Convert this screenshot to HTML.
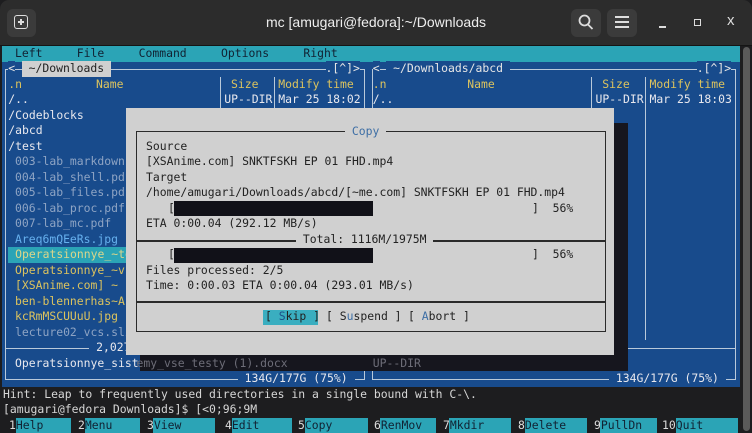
<!DOCTYPE html>
<html><head><meta charset="utf-8"><style>
*{margin:0;padding:0;box-sizing:border-box}
body{width:752px;height:433px;overflow:hidden;background:#1d1d1f;position:relative;font-family:"DejaVu Sans Mono","Liberation Mono",monospace}
.hdr{position:absolute;left:0;top:0;width:752px;height:46px;background:#2c2c2c;border-radius:9px 9px 0 0;border-bottom:1px solid #151515}
.btn{position:absolute;background:#3b3b3b;border-radius:6px}
.a{position:absolute;white-space:pre;font-size:11.42px;line-height:15.48px;height:15.48px;left:calc(1.5px + var(--c)*6.75px);top:calc(46px + var(--r)*15.48px);color:#e6e6e6}
.p{position:absolute;white-space:pre;font-size:11.42px;line-height:15.48px;height:15.48px;color:#222}
.y{color:#dcc35e}.g{color:#8ea4c4}.lb{color:#66b0ee}.w{color:#e8e8ee}
.bb{background:#184b8c}
.vl{position:absolute;width:1px;background:#b9c9da}
.hz{position:absolute;height:1px;background:#b9c9da}
.k{position:absolute;top:417.5px;height:15.5px;background:#2ba4b6}
.kd{position:absolute;top:417.5px;font-size:11.42px;line-height:15.5px;color:#ddd;white-space:pre}
.kl{color:#123;}
</style></head><body>
<div class="hdr"></div>
<div class="btn" style="left:7px;top:9px;width:29px;height:28px"></div>
<div style="position:absolute;left:14px;top:15px;width:14px;height:14px;border:1.6px solid #ddd;border-radius:3px"></div>
<div style="position:absolute;left:18px;top:21px;width:6px;height:1.6px;background:#ddd"></div>
<div style="position:absolute;left:20.2px;top:18.8px;width:1.6px;height:6px;background:#ddd"></div>
<div style="position:absolute;left:0;width:752px;top:14px;text-align:center;font:14px 'Liberation Sans',sans-serif;color:#eee">mc [amugari@fedora]:~/Downloads</div>
<div class="btn" style="left:571px;top:9px;width:30px;height:28px"></div>
<svg style="position:absolute;left:578px;top:14px" width="16" height="17" viewBox="0 0 16 17"><circle cx="6.5" cy="6.5" r="5" fill="none" stroke="#ddd" stroke-width="1.8"/><path d="M10 10.5 L14.5 15" stroke="#ddd" stroke-width="1.8"/></svg>
<div class="btn" style="left:607px;top:9px;width:30px;height:28px"></div>
<div style="position:absolute;left:615px;top:16px;width:14px;height:2px;background:#ddd;box-shadow:0 5px 0 #ddd,0 10px 0 #ddd"></div>
<div style="position:absolute;left:659px;top:26px;width:7px;height:2px;background:#ddd"></div>
<div style="position:absolute;left:694px;top:19px;width:7px;height:7px;border:1.5px solid #ddd"></div>
<div style="position:absolute;left:727px;top:12px;font:15px 'Liberation Sans',sans-serif;color:#ddd">x</div>

<div style="position:absolute;left:743px;top:47px;width:7px;height:384px;background:#5a5a5a;border-radius:4px"></div>

<div style="position:absolute;left:2px;top:46px;width:738px;height:15.5px;background:#2ba4b6"></div>
<div class="a" style="--c:2;--r:0;color:#123">Left     File     Command     Options     Right</div>

<div class="bb" style="position:absolute;left:2px;top:61.5px;width:738px;height:325px"></div>
<div class="hz" style="left:5px;top:69px;width:359px"></div>
<div class="vl" style="left:5px;top:69px;height:310px"></div>
<div class="vl" style="left:364px;top:69px;height:310px"></div>
<div class="hz" style="left:5px;top:348px;width:359px"></div>
<div class="hz" style="left:5px;top:379px;width:360px"></div>
<div class="vl" style="left:220px;top:77px;height:263px"></div>
<div class="vl" style="left:274px;top:77px;height:263px"></div>
<div class="hz" style="left:372px;top:69px;width:363px"></div>
<div class="vl" style="left:372px;top:69px;height:310px"></div>
<div class="vl" style="left:735px;top:69px;height:310px"></div>
<div class="hz" style="left:372px;top:348px;width:363px"></div>
<div class="hz" style="left:372px;top:379px;width:364px"></div>
<div class="vl" style="left:591px;top:77px;height:263px"></div>
<div class="vl" style="left:645px;top:77px;height:263px"></div>

<div class="a bb" style="--c:1;--r:1">&lt;</div>
<div class="a" style="--c:3;--r:1;background:#d0d0d0;color:#222"> ~/Downloads </div>
<div class="a bb" style="--c:48;--r:1">.[^]&gt;</div>
<div class="a bb" style="--c:55;--r:1">&lt;</div>
<div class="a bb" style="--c:57;--r:1"> ~/Downloads/abcd </div>
<div class="a bb" style="--c:103;--r:1">.[^]&gt;</div>

<div class="a y" style="--c:1;--r:2">.n</div>
<div class="a y" style="--c:14;--r:2">Name</div>
<div class="a y" style="--c:34;--r:2">Size</div>
<div class="a y" style="--c:41;--r:2">Modify time</div>
<div class="a y" style="--c:55;--r:2">.n</div>
<div class="a y" style="--c:69;--r:2">Name</div>
<div class="a y" style="--c:89;--r:2">Size</div>
<div class="a y" style="--c:96;--r:2">Modify time</div>

<div class="a w" style="--c:1;--r:3">/..</div>
<div class="a w bb" style="--c:33;--r:3">UP--DIR</div>
<div class="a w" style="--c:41;--r:3">Mar 25 18:02</div>
<div class="a w" style="--c:55;--r:3">/..</div>
<div class="a w bb" style="--c:88;--r:3">UP--DIR</div>
<div class="a w" style="--c:96;--r:3">Mar 25 18:03</div>
<div class="a w" style="--c:1;--r:4">/Codeblocks</div>
<div class="a w" style="--c:1;--r:5">/abcd</div>
<div class="a w" style="--c:1;--r:6">/test</div>
<div class="a g" style="--c:2;--r:7">003-lab_markdown</div>
<div class="a g" style="--c:2;--r:8">004-lab_shell.pdf</div>
<div class="a g" style="--c:2;--r:9">005-lab_files.pdf</div>
<div class="a g" style="--c:2;--r:10">006-lab_proc.pdf</div>
<div class="a g" style="--c:2;--r:11">007-lab_mc.pdf</div>
<div class="a lb" style="--c:2;--r:12">Areq6mQEeRs.jpg</div>
<div class="a" style="--c:1;--r:13;width:351px;background:#2ba4b6;color:#dcd58a"> Operatsionnye_~testy.docx</div>
<div class="a y" style="--c:2;--r:14">Operatsionnye_~vse.docx</div>
<div class="a y" style="--c:2;--r:15">[XSAnime.com] ~ FHD.mp4</div>
<div class="a y" style="--c:2;--r:16">ben-blennerhas~Ass.jpg</div>
<div class="a y" style="--c:2;--r:17">kcRmMSCUUuU.jpg</div>
<div class="a g" style="--c:2;--r:18">lecture02_vcs.slides.pdf</div>
<div class="a w bb" style="--c:13;--r:19"> 2,027M </div>
<div class="a w" style="--c:2;--r:20">Operatsionnye_sist</div>
<div class="a w bb" style="--c:35;--r:21"> 134G/177G (75%) </div>
<div class="a w bb" style="--c:90;--r:21"> 134G/177G (75%) </div>

<div style="position:absolute;left:614px;top:123px;width:14px;height:248px;background:#16161e"></div>
<div style="position:absolute;left:140px;top:355px;width:488px;height:16px;background:#16161e"></div>
<div class="a" style="--c:20;--r:20;color:#6d6d78">emy_vse_testy (1).docx</div>
<div class="a" style="--c:55;--r:20;color:#6d6d78">UP--DIR</div>

<div style="position:absolute;left:126px;top:108px;width:488px;height:247px;background:#d0d0d0"></div>
<div style="position:absolute;left:136px;top:131px;width:470px;height:201px;border:1.5px solid #2a2a2a"></div>
<div style="position:absolute;left:136px;top:240px;width:470px;height:1.5px;background:#2a2a2a"></div>
<div style="position:absolute;left:136px;top:301px;width:470px;height:1.5px;background:#2a2a2a"></div>
<div class="p" style="left:345px;top:123.5px;background:#d0d0d0;color:#3d6ea5"> Copy </div>
<div class="p" style="left:146px;top:138.8px">Source</div>
<div class="p" style="left:146px;top:154.3px">[XSAnime.com] SNKTFSKH EP 01 FHD.mp4</div>
<div class="p" style="left:146px;top:169.8px">Target</div>
<div class="p" style="left:146px;top:185.2px">/home/amugari/Downloads/abcd/[~me.com] SNKTFSKH EP 01 FHD.mp4</div>
<div class="p" style="left:168px;top:200.7px">[</div>
<div style="position:absolute;left:174px;top:201px;width:199px;height:15px;background:#111118"></div>
<div class="p" style="left:532px;top:200.7px">]  56%</div>
<div class="p" style="left:146px;top:216.2px">ETA 0:00.04 (292.12 MB/s)</div>
<div class="p" style="left:296px;top:231.6px;background:#d0d0d0"> Total: 1116M/1975M </div>
<div class="p" style="left:168px;top:247.1px">[</div>
<div style="position:absolute;left:174px;top:247.5px;width:199px;height:15px;background:#111118"></div>
<div class="p" style="left:532px;top:247.1px">]  56%</div>
<div class="p" style="left:146px;top:262.6px">Files processed: 2/5</div>
<div class="p" style="left:146px;top:278px">Time: 0:00.03 ETA 0:00.04 (293.01 MB/s)</div>
<div style="position:absolute;left:263px;top:310px;width:55px;height:15px;background:#3aaec0"></div>
<div class="p" style="left:265px;top:309.2px">[ <span style="color:#1d4f8a">S</span>kip ]</div>
<div class="p" style="left:326px;top:309.2px">[ S<span style="color:#3d6ea5">u</span>spend ]</div>
<div class="p" style="left:408px;top:309.2px">[ <span style="color:#3d6ea5">A</span>bort ]</div>

<div class="a" style="--c:0;--r:22;left:3px;color:#d6d6d6">Hint: Leap to frequently used directories in a single bound with C-\.</div>
<div class="a" style="--c:0;--r:23;left:3px;color:#d6d6d6">[amugari@fedora Downloads]$ [&lt;0;96;9M</div>

<div class="k" style="left:16px;width:55px"></div><div class="kd" style="left:9px">1<span class="kl">Help</span></div>
<div class="k" style="left:85px;width:55px"></div><div class="kd" style="left:78px">2<span class="kl">Menu</span></div>
<div class="k" style="left:153px;width:62px"></div><div class="kd" style="left:147px">3<span class="kl">View</span></div>
<div class="k" style="left:232px;width:60px"></div><div class="kd" style="left:225px">4<span class="kl">Edit</span></div>
<div class="k" style="left:305px;width:63px"></div><div class="kd" style="left:298px">5<span class="kl">Copy</span></div>
<div class="k" style="left:380px;width:56px"></div><div class="kd" style="left:374px">6<span class="kl">RenMov</span></div>
<div class="k" style="left:449px;width:62px"></div><div class="kd" style="left:443px">7<span class="kl">Mkdir</span></div>
<div class="k" style="left:525px;width:62px"></div><div class="kd" style="left:518px">8<span class="kl">Delete</span></div>
<div class="k" style="left:600px;width:57px"></div><div class="kd" style="left:594px">9<span class="kl">PullDn</span></div>
<div class="k" style="left:676px;width:62px"></div><div class="kd" style="left:662px">10<span class="kl">Quit</span></div>
</body></html>
